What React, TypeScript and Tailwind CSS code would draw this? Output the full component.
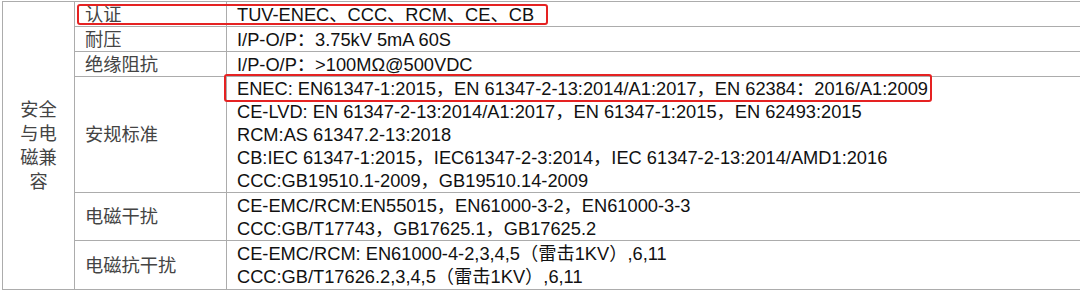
const FONT = "font-['Liberation_Sans','Noto_Sans_CJK_SC',sans-serif]";

const ROWS: { label: string; lines: string[]; h: string }[] = [
  { label: "认证", lines: ["TUV-ENEC、CCC、RCM、CE、CB"], h: "h-[25px]" },
  { label: "耐压", lines: ["I/P-O/P：3.75kV 5mA 60S"], h: "h-[25px]" },
  { label: "绝缘阻抗", lines: ["I/P-O/P：>100MΩ@500VDC"], h: "h-[25px]" },
  {
    label: "安规标准",
    lines: [
      "ENEC: EN61347-1:2015，EN 61347-2-13:2014/A1:2017，EN 62384：2016/A1:2009",
      "CE-LVD: EN 61347-2-13:2014/A1:2017，EN 61347-1:2015，EN 62493:2015",
      "RCM:AS 61347.2-13:2018",
      "CB:IEC 61347-1:2015，IEC61347-2-3:2014，IEC 61347-2-13:2014/AMD1:2016",
      "CCC:GB19510.1-2009，GB19510.14-2009",
    ],
    h: "h-[116px]",
  },
  {
    label: "电磁干扰",
    lines: ["CE-EMC/RCM:EN55015，EN61000-3-2，EN61000-3-3", "CCC:GB/T17743，GB17625.1，GB17625.2"],
    h: "h-[48px]",
  },
  {
    label: "电磁抗干扰",
    lines: ["CE-EMC/RCM: EN61000-4-2,3,4,5（雷击1KV）,6,11", "CCC:GB/T17626.2,3,4,5（雷击1KV）,6,11"],
    h: "h-[49px]",
  },
];

export default function App() {
  return (
    <div className={`relative w-[1080px] h-[291px] overflow-hidden bg-white ${FONT}`}>
      <table className="ml-[2px] mt-[1px] w-[1100px] border-collapse table-fixed text-[18.25px]">
        <colgroup>
          <col className="w-[72px]" />
          <col className="w-[152px]" />
          <col />
        </colgroup>
        <tbody>
          {ROWS.map((r, i) => (
            <tr key={r.label} className={r.h}>
              {i === 0 && (
                <td
                  rowSpan={ROWS.length}
                  className="border border-[#acacac] text-center align-middle text-[#444] leading-[24px] px-[17px]"
                >
                  安全与电磁兼容
                </td>
              )}
              <td className="border border-[#acacac] pl-[10px] align-middle text-[#444] leading-[23px] p-0">
                {r.label}
              </td>
              <td className="border border-[#acacac] pl-[10px] align-middle text-[#111] leading-[23px] p-0">
                {r.lines.map((l) => (
                  <div key={l} className="whitespace-nowrap">
                    {l}
                  </div>
                ))}
              </td>
            </tr>
          ))}
        </tbody>
      </table>

      {/* highlight boxes */}
      <div className="absolute left-[77px] top-[4px] w-[471px] h-[21px] border-2 border-[#e52222] rounded-[3px]" />
      <div className="absolute left-[224px] top-[74px] w-[708px] h-[28px] border-2 border-[#e52222] rounded-[3px]" />
    </div>
  );
}
